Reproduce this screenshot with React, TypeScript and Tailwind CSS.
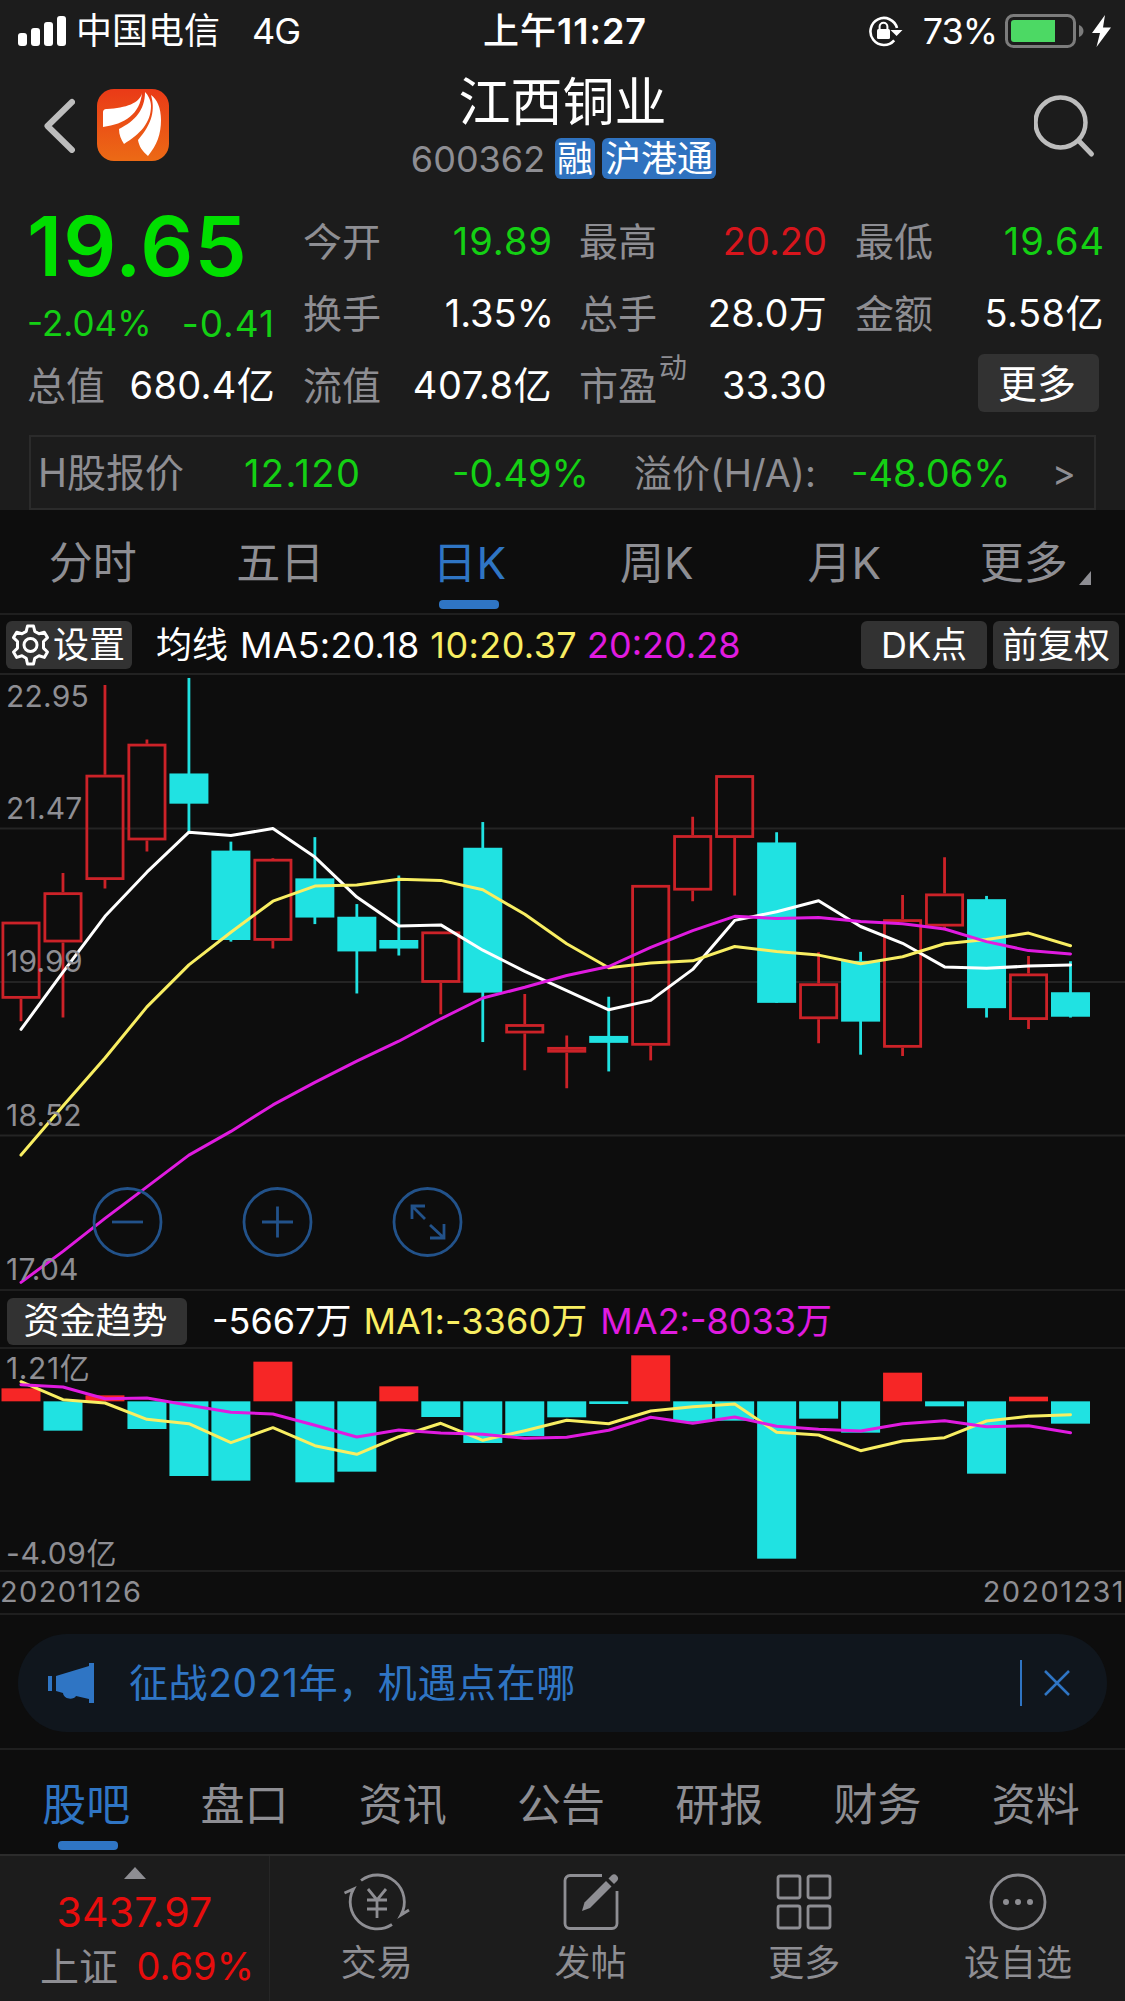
import React from 'react';

type Kind = 'up' | 'down';

interface Candle {
    kind: Kind;
    high: number;
    top: number;
    bottom: number;
    low: number;
}

const RED = '#cc2228';
const CYAN = '#20e2e2';
const YELLOW = '#f8ee62';
const MAGENTA = '#e01be0';

const STEP = 41.98;
const FIRST_X = 21;
const BAR_WIDTH = 39;

const toCandle = ([kind, high, top, bottom, low]: [Kind, number, number, number, number]): Candle => ({
    kind, high, top, bottom, low,
});

// Chart units, measured downwards from the top of the panel
const candles: Candle[] = ([
    ['up', 641, 641, 830, 885],
    ['up', 522, 569, 692, 876],
    ['up', 61, 281, 539, 560],
    ['up', 195, 205, 442, 469],
    ['down', 44, 278, 352, 420],
    ['down', 445, 467, 686, 690],
    ['up', 485, 487, 688, 707],
    ['down', 434, 535, 631, 647],
    ['down', 598, 629, 714, 817],
    ['down', 528, 686, 707, 724],
    ['up', 665, 665, 791, 868],
    ['down', 397, 460, 815, 936],
    ['up', 818, 892, 915, 1005],
    ['up', 920, 948, 962, 1049],
    ['down', 825, 921, 938, 1008],
    ['up', 551, 551, 945, 981],
    ['up', 384, 429, 565, 591],
    ['up', 282, 282, 436, 577],
    ['down', 422, 447, 840, 840],
    ['up', 716, 792, 880, 939],
    ['down', 715, 737, 886, 967],
    ['up', 576, 635, 950, 970],
    ['up', 483, 572, 653, 662],
    ['down', 578, 586, 853, 876],
    ['up', 725, 768, 882, 904],
    ['down', 738, 814, 874, 876],
] as [Kind, number, number, number, number][]).map(toCandle);

const ma5 = [905, 765, 628, 520, 422, 430, 413, 483, 581, 652, 649, 711, 763, 810, 857, 834, 758, 638, 617, 590, 653, 694, 752, 755, 750, 747];
const ma10 = [1213, 1093, 975, 850, 747, 667, 591, 554, 551, 537, 540, 563, 623, 695, 754, 742, 737, 702, 714, 723, 744, 727, 695, 685, 669, 700];
const ma20 = [1525, 1449, 1368, 1291, 1213, 1155, 1090, 1035, 983, 934, 879, 828, 802, 773, 751, 704, 663, 628, 633, 631, 641, 646, 659, 690, 712, 720];

const flowBars = [325, 452, 346, 447, 588, 602, 245, 607, 575, 319, 411, 489, 468, 412, 372, 226, 425, 422, 836, 416, 458, 278, 379, 581, 350, 431];
const flowMa1 = [305, 359, 369, 418, 431, 488, 443, 497, 523, 470, 430, 481, 452, 421, 431, 393, 380, 372, 457, 465, 512, 483, 473, 423, 409, 404];
const flowMa2 = [314, 321, 356, 354, 376, 397, 402, 436, 471, 450, 459, 463, 475, 472, 451, 412, 430, 411, 439, 448, 453, 431, 422, 440, 437, 458];
const FLOW_ZERO = 364;

const xAt = (i: number) => FIRST_X + i * STEP;
const priceY = (v: number) => v / 2.45 - 15;
const flowY = (v: number) => v / 3 - 69;

const toPoints = (values: number[], scale: (v: number) => number) =>
    values.map((v, i) => `${xAt(i).toFixed(1)},${scale(v).toFixed(1)}`).join(' ');

const StatusBar = () => (
    <div className="flex h-[62px] items-center text-[36px] leading-none text-white">
        <div className="flex w-[440px] items-center pl-[18px]">
            <svg width="48" height="30" viewBox="0 0 48 30" fill="#fff">
                <rect x="0" y="17" width="9" height="13" rx="3" />
                <rect x="13" y="12" width="9" height="18" rx="3" />
                <rect x="26" y="6" width="9" height="24" rx="3" />
                <rect x="39" y="0" width="9" height="30" rx="3" />
            </svg>
            <span className="ml-[10px]">中国电信</span>
            <span className="ml-[32px] tracking-[-1px]">4G</span>
        </div>
        <div className="w-[250px] text-center font-semibold tracking-[1px]">
            <span className="font-medium">上午</span>11:27
        </div>
        <div className="flex flex-1 items-center justify-end pr-[14px]">
            <svg width="35" height="32" viewBox="0 0 35 32" fill="none">
                <path d="M26.2 25.3A13.5 13.5 0 1 1 29 13" stroke="#fff" strokeWidth="2.6" />
                <path d="M22.5 15h12L28.6 21z" fill="#fff" />
                <rect x="9" y="14" width="13" height="10" rx="1.5" fill="#fff" />
                <path d="M11.6 15v-3.4a3.9 3.9 0 0 1 7.8 0V15" stroke="#fff" strokeWidth="2" />
            </svg>
            <span className="ml-[20px] tracking-[-1px]">73%</span>
            <svg className="ml-[8px]" width="79" height="34" viewBox="0 0 79 34" fill="none">
                <rect x="1.5" y="1.5" width="68" height="31" rx="7" stroke="#7c7c7c" strokeWidth="3" />
                <path d="M74 11c6 2 6 10 0 12z" fill="#7c7c7c" />
                <path d="M9 6h41v22H9a3 3 0 0 1-3-3V9a3 3 0 0 1 3-3z" fill="#4cd964" />
            </svg>
            <svg className="ml-[8px]" width="19" height="32" viewBox="0 0 19 32" fill="#fff">
                <path d="M13 0 0 18h8L4.500 32 19 12.500h-8z" />
            </svg>
        </div>
    </div>
);

const Header = () => (
    <div className="flex h-[143px] items-start justify-between pl-[43px] pr-[28px]">
        <div className="flex w-[300px] items-center pt-[27px]">
            <svg width="32" height="56" viewBox="0 0 32 56" fill="none">
                <path d="M29 5 4.500 29 29 53" stroke="#bdbdbd" strokeWidth="6" strokeLinecap="round" strokeLinejoin="round" />
            </svg>
            <svg className="ml-[22px]" width="72" height="72" viewBox="0 0 72 72">
                <defs>
                    <linearGradient id="logo" x1="0" y1="0" x2="0" y2="1">
                        <stop offset="0" stopColor="#ea3a17" />
                        <stop offset="1" stopColor="#ec6a15" />
                    </linearGradient>
                </defs>
                <rect width="72" height="72" rx="17" fill="url(#logo)" />
                <g fill="#fff">
                    <path d="M45 4C43 14 29 19 10 20c-3 0-4 1-4 4v14C28 35 43 25 45 4z" />
                    <path d="M48 3c0 18-10 29-26 37 0 6 2 10 5 15C43 45 54 34 54 17 54 11 51 6 48 3z" />
                    <path d="M54 6c4 14 2 28-13 45 1 6 4 11 10 16C60 56 64 45 64 31 64 19 60 10 54 6z" />
                </g>
            </svg>
        </div>
        <div className="flex flex-col items-center">
            <div className="flex h-[76px] items-center pt-[6px] text-[52px] leading-none text-white">江西铜业</div>
            <div className="ml-[2px] flex h-[41px] items-center text-[36px] leading-none">
                <span className="text-[#8e8e93]">600362</span>
                <span className="ml-[10px] flex h-[41px] w-[40px] items-center justify-center rounded-[6px] bg-[#2f72bf] text-white">融</span>
                <span className="ml-[7px] flex h-[41px] w-[114px] items-center justify-center rounded-[6px] bg-[#2f72bf] text-white">沪港通</span>
            </div>
        </div>
        <div className="flex w-[315px] justify-end pt-[33px]">
            <svg width="63" height="63" viewBox="0 0 63 63" fill="none" stroke="#bdbdbd">
                <circle cx="26.500" cy="27.500" r="25" strokeWidth="4.500" />
                <path d="m45 46 12.500 13" strokeWidth="5" strokeLinecap="round" />
            </svg>
        </div>
    </div>
);

interface StatProps {
    label: string;
    value: string;
    color?: string;
    sup?: string;
}

const Stat = ({ label, value, color = 'text-white tracking-[0.3px]', sup }: StatProps) => (
    <div className="flex h-[72px] items-center text-[38px] leading-none">
        <span className="text-[39px] text-[#8e8e93]">{label}</span>
        {sup && <span className="mb-[34px] ml-[2px] text-[28px] text-[#8e8e93]">{sup}</span>}
        <span className={`ml-auto ${color}`}>{value}</span>
    </div>
);

const Quote = () => (
    <div className="grid h-[216px] grid-cols-[248px_248px_248px_248px] gap-x-[28px] pl-[27px]">
        <div>
            <div className="flex h-[83px] items-center text-[83px] font-semibold leading-none tracking-[1.1px] text-[#00df00]">19.65</div>
            <div className="flex h-[61px] items-center justify-between pt-[10px] leading-none text-[#14d014]">
                <span className="text-[35px]">-2.04%</span>
                <span className="text-[37px] tracking-[1px]">-0.41</span>
            </div>
            <Stat label="总值" value="680.4亿" />
        </div>
        <div>
            <Stat label="今开" value="19.89" color="-mr-[2px] tracking-[1px] text-[#14d014]" />
            <Stat label="换手" value="1.35%" color="-mr-[3px] text-white" />
            <Stat label="流值" value="407.8亿" color="-mr-[1px] tracking-[0.5px] text-white" />
        </div>
        <div>
            <Stat label="最高" value="20.20" color="text-[#d8151c]" />
            <Stat label="总手" value="28.0万" />
            <Stat label="市盈" sup="动" value="33.30" />
        </div>
        <div>
            <Stat label="最低" value="19.64" color="-mr-[2px] tracking-[1px] text-[#14d014]" />
            <Stat label="金额" value="5.58亿" color="-mr-[1px] tracking-[0.5px] text-white" />
            <div className="flex h-[72px] items-center justify-end pr-[4px]">
                <button className="mb-[4px] h-[58px] w-[121px] rounded-[6px] bg-[#323232] pr-[3px] text-[39px] leading-none text-white">更多</button>
            </div>
        </div>
    </div>
);

const HSharePanel = () => (
    <div className="mx-[29px] mt-[14px] flex h-[75px] items-center border-2 border-[#2b2b2b] text-[38px] leading-none text-[#8e8e93]">
        <span className="w-[213px] pl-[7px] text-[39px]">H股报价</span>
        <span className="w-[208px] tracking-[1.4px] text-[#14d014]">12.120</span>
        <span className="w-[182px] text-[#14d014]">-0.49%</span>
        <span className="w-[217px]">溢价(H/A):</span>
        <span className="w-[201px] text-[#14d014]">-48.06%</span>
        <span className="text-[36px]">&gt;</span>
    </div>
);

const periods = ['分时', '五日', '日K', '周K', '月K'];

const PeriodTabs = () => (
    <div className="grid h-[105px] grid-cols-6 border-b-2 border-[#1f1f1f] text-[44px] leading-none text-[#8e8e93]">
        {periods.map((p) => (
            <div key={p} className={`flex flex-col items-center ${p === '日K' ? 'text-[#2f75c4]' : ''}`}>
                <span className={`flex h-[90px] items-center pt-[16px] ${p.endsWith('K') ? 'pl-[1px]' : 'pr-[2px]'}`}>{p}</span>
                {p === '日K' && <span className="h-[9px] w-[60px] rounded-[4px] bg-[#2f75c4]" />}
            </div>
        ))}
        <div className="flex h-[90px] items-center justify-center pt-[16px]">
            <span className="ml-[8px]">更多</span>
            <svg className="ml-[11px] mt-[29px]" width="12" height="14" viewBox="0 0 12 14" fill="#8e8e93">
                <path d="M12 0v14H0z" />
            </svg>
        </div>
    </div>
);

const GearIcon = () => (
    <svg width="41" height="42" viewBox="0 0 41 42" fill="none" stroke="#fff" strokeWidth="3" strokeLinejoin="round">
        <path d="M17.500 2h6l1.300 5.400 4.200 2.400 5.300-1.600 3.200 5.400-4 3.900v6.600l4 3.900-3.200 5.400-5.300-1.600-4.200 2.400L23.500 40h-6l-1.300-5.800-4.200-2.400-5.300 1.600L3.500 28l4-3.900v-6.600l-4-3.900 3.200-5.400L12 9.800l4.200-2.400z" />
        <circle cx="20.500" cy="21" r="6.500" />
    </svg>
);

const MaToolbar = () => (
    <div className="flex h-[60px] items-center border-b-2 border-[#222] pl-[6px] pr-[6px] pt-[2px] text-[36px] leading-none text-white">
        <button className="flex h-[48px] w-[126px] items-center rounded-[6px] bg-[#323232] pl-[4px]">
            <GearIcon />
            <span className="ml-[2px]">设置</span>
        </button>
        <span className="ml-[24px]">均线</span>
        <span className="ml-[12px] tracking-[0.2px]">MA5:20.18</span>
        <span className="ml-[11px] tracking-[0.4px] text-[#f8ee62]">10:20.37</span>
        <span className="ml-[10px] text-[#e01be0]">20:20.28</span>
        <button className="ml-auto h-[48px] w-[126px] rounded-[6px] bg-[#323232]">DK点</button>
        <button className="ml-[6px] h-[48px] w-[126px] rounded-[6px] bg-[#323232]">前复权</button>
    </div>
);

const CandleShape = ({ candle, x }: { candle: Candle; x: number }) => {
    const high = priceY(candle.high);
    const top = priceY(candle.top);
    const bottom = priceY(candle.bottom);
    const low = priceY(candle.low);
    if (candle.kind === 'down') {
        return (
            <g fill={CYAN}>
                <rect x={x - 1.4} y={high} width="2.800" height={low - high} />
                <rect x={x - BAR_WIDTH / 2} y={top} width={BAR_WIDTH} height={bottom - top} />
            </g>
        );
    }
    return (
        <g stroke={RED} strokeWidth="2.800" fill="none">
            <path d={`M${x} ${high}V${top}M${x} ${bottom}V${low}`} />
            <rect x={x - BAR_WIDTH / 2 + 1.4} y={top + 1.4} width={BAR_WIDTH - 2.8} height={bottom - top - 2.8} />
        </g>
    );
};

const priceLabels = [
    { text: '22.95', y: 32 },
    { text: '21.47', y: 144 },
    { text: '19.99', y: 297 },
    { text: '18.52', y: 451 },
    { text: '17.04', y: 605 },
];

const PriceChart = () => (
    <svg className="block" width="1125" height="614" viewBox="0 0 1125 614" fill="none">
        <g stroke="#242424" strokeWidth="2">
            <path d="M0 153.500H1125M0 307H1125M0 460.500H1125" />
        </g>
        {candles.map((c, i) => (
            <CandleShape key={i} candle={c} x={xAt(i)} />
        ))}
        <g strokeWidth="3" strokeLinejoin="round" strokeLinecap="round">
            <polyline points={toPoints(ma5, priceY)} stroke="#fff" />
            <polyline points={toPoints(ma10, priceY)} stroke={YELLOW} />
            <polyline points={toPoints(ma20, priceY)} stroke={MAGENTA} />
        </g>
        <g className="fill-[#8e8e93] text-[30px] tracking-[0.2px]">
            {priceLabels.map((l) => (
                <text key={l.text} x="6" y={l.y}>{l.text}</text>
            ))}
        </g>
        {/* Zoom controls */}
        <g stroke="#22528a" strokeWidth="2.800">
            <circle cx="127.500" cy="547" r="33.500" />
            <path d="M112 547h31" />
            <circle cx="277.500" cy="547" r="33.500" />
            <path d="M262 547h31M277.500 531.500v31" />
            <circle cx="427.500" cy="547" r="33.500" />
            <path d="M425 544 412 531M412 544v-13h13M430 550l14 13M444 549v14h-14" />
        </g>
    </svg>
);

const FlowToolbar = () => (
    <div className="flex h-[60px] items-center border-y-2 border-[#1f1f1f] pl-[7px] pt-[4px] text-[36px] leading-none text-white">
        <button className="h-[47px] w-[180px] rounded-[6px] bg-[#323232] pr-[3px]">资金趋势</button>
        <span className="ml-[25px]">-5667万</span>
        <span className="ml-[12px] tracking-[0.1px] text-[#f8ee62]">MA1:-3360万</span>
        <span className="ml-[13px] text-[#e01be0]">MA2:-8033万</span>
    </div>
);

const FlowChart = () => (
    <svg className="block" width="1125" height="221" viewBox="0 0 1125 221" fill="none">
        {flowBars.map((v, i) => (
            <rect
                key={i}
                x={xAt(i) - BAR_WIDTH / 2}
                y={flowY(Math.min(v, FLOW_ZERO))}
                width={BAR_WIDTH}
                height={Math.abs(v - FLOW_ZERO) / 3}
                fill={v < FLOW_ZERO ? '#f62626' : CYAN}
            />
        ))}
        <g strokeWidth="3" strokeLinejoin="round" strokeLinecap="round">
            <polyline points={toPoints(flowMa1, flowY)} stroke={YELLOW} />
            <polyline points={toPoints(flowMa2, flowY)} stroke={MAGENTA} />
        </g>
        <g className="fill-[#8e8e93] text-[30px] tracking-[0.6px]">
            <text x="6" y="30">1.21亿</text>
            <text x="6" y="215">-4.09亿</text>
        </g>
    </svg>
);

const DateAxis = () => (
    <div className="flex h-[45px] items-center justify-between border-y-2 border-[#1f1f1f] pb-[2px] text-[29px] leading-none tracking-[1.4px] text-[#8e8e93]">
        <span>20201126</span>
        <span>20201231</span>
    </div>
);

const Notice = () => (
    <div className="flex h-[135px] items-center border-b-2 border-[#1f1f1f] px-[18px] pt-[2px]">
        <div className="flex h-[98px] w-full items-center rounded-full bg-[#10161d] pl-[30px] pr-[37px] text-[#2f75c4]">
            <svg width="46" height="40" viewBox="0 0 46 40" fill="currentColor">
                <rect x="0" y="13" width="4" height="15" />
                <path d="M8 13 41 3V0h5v40h-5v-4l-13-3c-2 4-12 4-13-3l-7-2z" />
            </svg>
            <span className="ml-[35px] text-[39px] leading-none tracking-[0.6px]">征战2021年，机遇点在哪</span>
            <span className="ml-auto h-[46px] w-[2px] bg-[#2f75c4]" />
            <svg className="ml-[22px]" width="26" height="26" viewBox="0 0 26 26" stroke="currentColor" strokeWidth="2.500">
                <path d="m1 1 24 24M25 1 1 25" />
            </svg>
        </div>
    </div>
);

const sections = ['股吧', '盘口', '资讯', '公告', '研报', '财务', '资料'];

const SectionTabs = () => (
    <div className="grid h-[104px] grid-cols-7 pl-[7px] pr-[10px] text-[44px] leading-none text-[#8e8e93]">
        {sections.map((s, i) => (
            <div key={s} className={`flex flex-col items-center ${i === 0 ? 'text-[#2f75c4]' : ''}`}>
                <span className="flex h-[91px] items-center pt-[18px]">{s}</span>
                {i === 0 && <span className="ml-[3px] h-[9px] w-[60px] rounded-[4px] bg-[#2f75c4]" />}
            </div>
        ))}
    </div>
);

const TradeIcon = () => (
    <svg className="overflow-visible" width="66" height="60" viewBox="0 0 66 60" fill="none" stroke="#8e8e93" strokeWidth="2.800">
        <path d="M17 8.500A27 27 0 0 1 57 43l8-5" />
        <path d="M48 52.500A27 27 0 0 1 9.500 17l-9 4" />
        <path d="m24 17 9 11 9-11M33 28v18M23 28h20M23 37h20" />
    </svg>
);

const PostIcon = () => (
    <svg width="56" height="60" viewBox="0 0 56 60" fill="none">
        <path d="M39 3.500H7a5 5 0 0 0-5 5v43a5 5 0 0 0 5 5h42a5 5 0 0 0 5-5V19" stroke="#8e8e93" strokeWidth="2.800" />
        <path d="m19 39 2.500-8.500L43 9l5.500 5.500L27 36z" fill="#8e8e93" />
        <path d="m45.500 6.500 3-3a3.900 3.900 0 0 1 5.500 5.500l-3 3z" fill="#8e8e93" />
    </svg>
);

const GridIcon = () => (
    <svg width="56" height="60" viewBox="0 0 56 60" fill="none" stroke="#8e8e93" strokeWidth="2.800">
        <rect x="2" y="4" width="22" height="22" rx="2" />
        <rect x="32" y="4" width="22" height="22" rx="2" />
        <rect x="2" y="34" width="22" height="22" rx="2" />
        <rect x="32" y="34" width="22" height="22" rx="2" />
    </svg>
);

const DotsIcon = () => (
    <svg width="58" height="60" viewBox="0 0 58 60" fill="none" stroke="#8e8e93" strokeWidth="2.800">
        <circle cx="29" cy="30" r="27" />
        <g fill="#8e8e93" stroke="none">
            <circle cx="17" cy="30" r="3" />
            <circle cx="29" cy="30" r="3" />
            <circle cx="41" cy="30" r="3" />
        </g>
    </svg>
);

const actions = [
    { label: '交易', icon: <TradeIcon /> },
    { label: '发帖', icon: <PostIcon /> },
    { label: '更多', icon: <GridIcon /> },
    { label: '设自选', icon: <DotsIcon /> },
];

const BottomBar = () => (
    <div className="flex h-[148px] border-t-2 border-[#2c2c2c] bg-[#1c1c1c] leading-none">
        <div className="flex w-[270px] flex-col items-center border-r border-[#262626] pt-[11px]">
            <svg width="22" height="12" viewBox="0 0 22 12" fill="#8e8e93">
                <path d="m11 0 11 12H0z" />
            </svg>
            <span className="mt-[13px] text-[41px] tracking-[0.2px] text-[#e80d0d]">3437.97</span>
            <div className="mt-[14px] flex w-full justify-between pl-[40px] pr-[15px] text-[38px]">
                <span className="text-[39px] text-[#8e8e93]">上证</span>
                <span className="text-[#e80d0d]">0.69%</span>
            </div>
        </div>
        {actions.map((a) => (
            <div key={a.label} className="flex flex-1 flex-col items-center pt-[16px] text-[36px] text-[#8e8e93]">
                {a.icon}
                <span className="mt-[13px]">{a.label}</span>
            </div>
        ))}
    </div>
);

const App = () => {
    return (
        <div className="h-[2001px] w-[1125px] overflow-hidden whitespace-nowrap bg-[#0d0d0d] font-['Inter','Noto_Sans_CJK_SC',sans-serif]">
            <div className="h-[510px] bg-[#1c1c1c]">
                <StatusBar />
                <Header />
                <Quote />
                <HSharePanel />
            </div>
            <PeriodTabs />
            <MaToolbar />
            <PriceChart />
            <FlowToolbar />
            <FlowChart />
            <DateAxis />
            <Notice />
            <SectionTabs />
            <BottomBar />
        </div>
    );
};

export default App;
